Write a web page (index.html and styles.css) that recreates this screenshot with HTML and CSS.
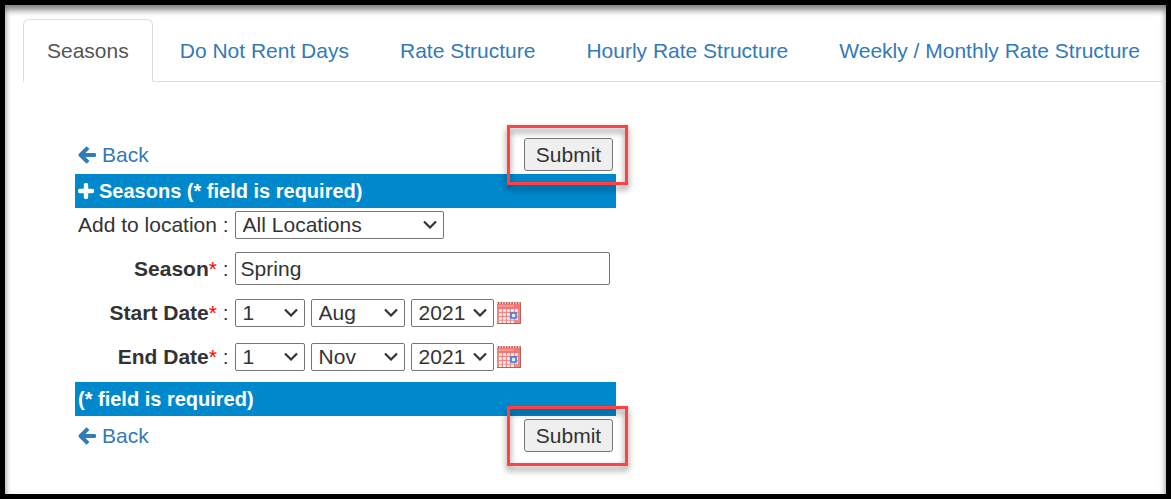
FILE: index.html
```html
<!DOCTYPE html>
<html lang="en">
<head>
    <meta charset="UTF-8">
    <meta name="viewport" content="width=device-width, initial-scale=1.0">
    <title>Seasons</title>
    <link rel="stylesheet" href="styles.css">
</head>
<body>
    <svg class="symbols" aria-hidden="true">
        <symbol id="arrow-left" viewBox="0 0 18 20">
            <path d="M10 2.6 L2.6 10 L10 17.4" fill="none" stroke="currentColor" stroke-width="4" stroke-linejoin="round"/>
            <path d="M4 10 H16.2" fill="none" stroke="currentColor" stroke-width="4.2" stroke-linecap="round"/>
        </symbol>
        <symbol id="plus" viewBox="0 0 16 16">
            <path d="M8 2 V14 M2 8 H14" fill="none" stroke="currentColor" stroke-width="4.4" stroke-linecap="round"/>
        </symbol>
        <symbol id="calendar" viewBox="0 0 24 22">
            <rect width="24" height="22" fill="#f08a86"/>
            <rect width="24" height="2" fill="#f3c4c0"/>
            <path d="M1 1 H24" stroke="#a0605a" stroke-width="2" stroke-dasharray="1.2 1.5"/>
            <rect y="2" width="24" height="5" fill="#f27673"/>
            <path d="M1 4 H17" stroke="#f9a19d" stroke-width="1.5"/>
            <path d="M2 8.5 H22 M2 12.5 H22 M2 16.5 H22 M2 20 H18" stroke="#fff6f5" stroke-width="2.6" stroke-dasharray="2.8 1.2"/>
            <path d="M23.5 2 V21.5 H0" fill="none" stroke="#b9605a" stroke-width="1"/>
            <rect x="14" y="11" width="5" height="5" fill="#e4eeff" stroke="#3c78e6" stroke-width="1.6"/>
        </symbol>
    </svg>

    <nav>
        <ul class="tabs">
            <li class="active"><a href="#seasons">Seasons</a></li>
            <li><a href="#norent">Do Not Rent Days</a></li>
            <li><a href="#rate">Rate Structure</a></li>
            <li><a href="#hourly">Hourly Rate Structure</a></li>
            <li><a href="#weekly">Weekly / Monthly Rate Structure</a></li>
        </ul>
    </nav>

    <form class="season-form">
        <div class="actions">
            <a class="back" href="#back"><svg><use href="#arrow-left"/></svg>Back</a>
            <div class="highlight"><button type="submit" class="submit">Submit</button></div>
        </div>

        <div class="bar"><svg><use href="#plus"/></svg>Seasons (* field is required)</div>

        <div class="fields">
            <label for="location">Add to location :</label>
            <div class="field">
                <select id="location" class="location">
                    <option>All Locations</option>
                </select>
            </div>

            <label for="season"><b>Season</b><span class="required">*</span> :</label>
            <div class="field">
                <input type="text" id="season" value="Spring">
            </div>

            <label for="start-day"><b>Start Date</b><span class="required">*</span> :</label>
            <div class="field">
                <select id="start-day" class="day"><option>1</option></select>
                <select class="month" aria-label="Start month"><option>Aug</option></select>
                <select class="year" aria-label="Start year"><option>2021</option></select>
                <button type="button" class="calendar" aria-label="Pick start date"><svg><use href="#calendar"/></svg></button>
            </div>

            <label for="end-day"><b>End Date</b><span class="required">*</span> :</label>
            <div class="field">
                <select id="end-day" class="day"><option>1</option></select>
                <select class="month" aria-label="End month"><option>Nov</option></select>
                <select class="year" aria-label="End year"><option>2021</option></select>
                <button type="button" class="calendar" aria-label="Pick end date"><svg><use href="#calendar"/></svg></button>
            </div>
        </div>

        <div class="bar">(* field is required)</div>

        <div class="actions">
            <a class="back" href="#back"><svg><use href="#arrow-left"/></svg>Back</a>
            <div class="highlight"><button type="submit" class="submit">Submit</button></div>
        </div>
    </form>
</body>
</html>
```
FILE: styles.css
```css
* {
    box-sizing: border-box;
}

body {
    margin: 0;
    min-height: 100vh;
    padding-top: 14px;
    border: 5px solid #000;
    background-color: #fff;
    box-shadow: inset 0 5px 6px rgba(0, 0, 0, 0.5);
    font-family: "Liberation Sans", Arial, sans-serif;
    font-size: 21px;
    line-height: 30px;
    color: #333;
}

a {
    color: #337ab7;
    text-decoration: none;
}

.symbols {
    position: absolute;
    width: 0;
    height: 0;
}

/* tabs */
.tabs {
    display: flex;
    margin: 0 0 0 18px;
    padding: 0;
    list-style: none;
    white-space: nowrap;
    border-bottom: 1px solid #ddd;
}

.tabs li {
    margin: 0 3px -1px 0;
}

.tabs a {
    display: block;
    padding: 16px 23px 15px;
    border: 1px solid transparent;
    border-radius: 6px 6px 0 0;
}

.tabs .active a {
    color: #555;
    background-color: #fff;
    border-color: #ddd #ddd #fff;
}

/* form */
.season-form {
    max-width: 541px;
    margin: 53px 0 0 70px;
}

.actions {
    display: flex;
    justify-content: space-between;
    align-items: center;
    height: 39px;
    padding: 0 3px;
}

.back {
    display: flex;
    align-items: center;
    gap: 6px;
}

.back svg {
    width: 18px;
    height: 20px;
}

.submit {
    display: block;
    width: 89px;
    height: 33px;
    padding: 0;
    border: 1px solid #767676;
    border-radius: 3px;
    background-color: #efefef;
    font: inherit;
    color: #333;
}

.highlight {
    position: relative;
}

.highlight::after {
    content: "";
    position: absolute;
    inset: -13px -15px -14px -17px;
    border: 3px solid #ff4343;
    filter: drop-shadow(0 4px 3px rgba(0, 0, 0, 0.5));
    pointer-events: none;
}

.bar {
    display: flex;
    align-items: center;
    gap: 5px;
    height: 34px;
    padding: 0 3px;
    background-color: #0088cc;
    font-size: 20px;
    font-weight: bold;
    color: #fff;
}

.bar svg {
    width: 16px;
    height: 16px;
}

.fields {
    display: grid;
    grid-template-columns: auto 1fr;
    grid-auto-rows: 33px;
    align-items: center;
    gap: 11px 6px;
    padding: 0 6px 9px 3px;
}

.fields label {
    text-align: right;
}

.required {
    color: #f00;
}

.field {
    display: flex;
    align-items: center;
}

input,
select {
    border: 1px solid #767676;
    border-radius: 2px;
    background-color: #fff;
    font: inherit;
    color: #333;
}

input {
    width: 100%;
    height: 33px;
    padding: 0 5px;
}

select {
    appearance: none;
    height: 28px;
    padding: 0 7px;
    line-height: 26px;
    background-image: url("data:image/svg+xml,%3Csvg xmlns='http://www.w3.org/2000/svg' width='14' height='9'%3E%3Cpath d='M1 1.5 L7 7.5 L13 1.5' fill='none' stroke='%23333' stroke-width='2.2'/%3E%3C/svg%3E");
    background-repeat: no-repeat;
    background-position: right 6px center;
}

select + select {
    margin-left: 6px;
}

.location {
    width: 209px;
}

.day {
    width: 70px;
}

.month {
    width: 94px;
}

.year {
    width: 83px;
}

.calendar {
    margin-left: 3px;
    padding: 0;
    border: 0;
    background: none;
}

.calendar svg {
    display: block;
    width: 24px;
    height: 22px;
}
```
